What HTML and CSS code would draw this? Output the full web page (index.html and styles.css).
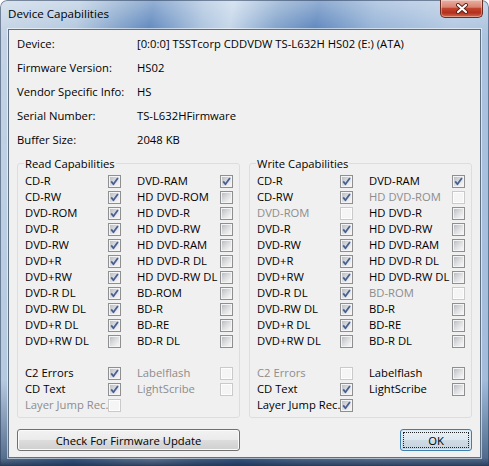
FILE: index.html
```html
<!DOCTYPE html>
<html>
<head>
<meta charset="utf-8">
<title>Device Capabilities</title>
<link rel="stylesheet" href="styles.css">
</head>
<body>
<div class="window">
  <div class="titlebar">
    <span class="title">Device Capabilities</span>
    <div class="close">
      <svg class="xicon" width="16" height="11" viewBox="0 0 16 11">
        <path class="xo" d="M4 2L12 9M12 2L4 9"/>
        <path class="xi" d="M4 2L12 9M12 2L4 9"/>
      </svg>
    </div>
  </div>
  <div class="client">
    <div class="info">
      <span>Device:</span><span>[0:0:0] TSSTcorp CDDVDW TS-L632H HS02 (E:) (ATA)</span>
      <span>Firmware Version:</span><span>HS02</span>
      <span>Vendor Specific Info:</span><span>HS</span>
      <span>Serial Number:</span><span>TS-L632HFirmware</span>
      <span>Buffer Size:</span><span>2048 KB</span>
    </div>
    <div class="groups">
      <fieldset class="group">
        <legend>Read Capabilities</legend>
        <div class="caps">
          <div class="cap"><span class="lbl">CD-R</span><span class="cb"><svg class="tick" viewBox="0 0 11 11"><path d="M2.2 5.4L4.4 8.2L8.9 2"/></svg></span></div>
          <div class="cap"><span class="lbl">DVD-RAM</span><span class="cb"><svg class="tick" viewBox="0 0 11 11"><path d="M2.2 5.4L4.4 8.2L8.9 2"/></svg></span></div>
          <div class="cap"><span class="lbl">CD-RW</span><span class="cb"><svg class="tick" viewBox="0 0 11 11"><path d="M2.2 5.4L4.4 8.2L8.9 2"/></svg></span></div>
          <div class="cap"><span class="lbl">HD DVD-ROM</span><span class="cb"></span></div>
          <div class="cap"><span class="lbl">DVD-ROM</span><span class="cb"><svg class="tick" viewBox="0 0 11 11"><path d="M2.2 5.4L4.4 8.2L8.9 2"/></svg></span></div>
          <div class="cap"><span class="lbl">HD DVD-R</span><span class="cb"></span></div>
          <div class="cap"><span class="lbl">DVD-R</span><span class="cb"><svg class="tick" viewBox="0 0 11 11"><path d="M2.2 5.4L4.4 8.2L8.9 2"/></svg></span></div>
          <div class="cap"><span class="lbl">HD DVD-RW</span><span class="cb"></span></div>
          <div class="cap"><span class="lbl">DVD-RW</span><span class="cb"><svg class="tick" viewBox="0 0 11 11"><path d="M2.2 5.4L4.4 8.2L8.9 2"/></svg></span></div>
          <div class="cap"><span class="lbl">HD DVD-RAM</span><span class="cb"></span></div>
          <div class="cap"><span class="lbl">DVD+R</span><span class="cb"><svg class="tick" viewBox="0 0 11 11"><path d="M2.2 5.4L4.4 8.2L8.9 2"/></svg></span></div>
          <div class="cap"><span class="lbl">HD DVD-R DL</span><span class="cb"></span></div>
          <div class="cap"><span class="lbl">DVD+RW</span><span class="cb"><svg class="tick" viewBox="0 0 11 11"><path d="M2.2 5.4L4.4 8.2L8.9 2"/></svg></span></div>
          <div class="cap"><span class="lbl">HD DVD-RW DL</span><span class="cb"></span></div>
          <div class="cap"><span class="lbl">DVD-R DL</span><span class="cb"><svg class="tick" viewBox="0 0 11 11"><path d="M2.2 5.4L4.4 8.2L8.9 2"/></svg></span></div>
          <div class="cap"><span class="lbl">BD-ROM</span><span class="cb"></span></div>
          <div class="cap"><span class="lbl">DVD-RW DL</span><span class="cb"><svg class="tick" viewBox="0 0 11 11"><path d="M2.2 5.4L4.4 8.2L8.9 2"/></svg></span></div>
          <div class="cap"><span class="lbl">BD-R</span><span class="cb"></span></div>
          <div class="cap"><span class="lbl">DVD+R DL</span><span class="cb"><svg class="tick" viewBox="0 0 11 11"><path d="M2.2 5.4L4.4 8.2L8.9 2"/></svg></span></div>
          <div class="cap"><span class="lbl">BD-RE</span><span class="cb"></span></div>
          <div class="cap"><span class="lbl">DVD+RW DL</span><span class="cb"></span></div>
          <div class="cap"><span class="lbl">BD-R DL</span><span class="cb"></span></div>
        </div>
        <div class="caps extras">
          <div class="cap"><span class="lbl">C2 Errors</span><span class="cb"><svg class="tick" viewBox="0 0 11 11"><path d="M2.2 5.4L4.4 8.2L8.9 2"/></svg></span></div>
          <div class="cap dis"><span class="lbl">Labelflash</span><span class="cb"></span></div>
          <div class="cap"><span class="lbl">CD Text</span><span class="cb"><svg class="tick" viewBox="0 0 11 11"><path d="M2.2 5.4L4.4 8.2L8.9 2"/></svg></span></div>
          <div class="cap dis"><span class="lbl">LightScribe</span><span class="cb"></span></div>
          <div class="cap dis"><span class="lbl">Layer Jump Rec.</span><span class="cb"></span></div>
        </div>
      </fieldset>
      <fieldset class="group">
        <legend>Write Capabilities</legend>
        <div class="caps">
          <div class="cap"><span class="lbl">CD-R</span><span class="cb"><svg class="tick" viewBox="0 0 11 11"><path d="M2.2 5.4L4.4 8.2L8.9 2"/></svg></span></div>
          <div class="cap"><span class="lbl">DVD-RAM</span><span class="cb"><svg class="tick" viewBox="0 0 11 11"><path d="M2.2 5.4L4.4 8.2L8.9 2"/></svg></span></div>
          <div class="cap"><span class="lbl">CD-RW</span><span class="cb"><svg class="tick" viewBox="0 0 11 11"><path d="M2.2 5.4L4.4 8.2L8.9 2"/></svg></span></div>
          <div class="cap dis"><span class="lbl">HD DVD-ROM</span><span class="cb"></span></div>
          <div class="cap dis"><span class="lbl">DVD-ROM</span><span class="cb"></span></div>
          <div class="cap"><span class="lbl">HD DVD-R</span><span class="cb"></span></div>
          <div class="cap"><span class="lbl">DVD-R</span><span class="cb"><svg class="tick" viewBox="0 0 11 11"><path d="M2.2 5.4L4.4 8.2L8.9 2"/></svg></span></div>
          <div class="cap"><span class="lbl">HD DVD-RW</span><span class="cb"></span></div>
          <div class="cap"><span class="lbl">DVD-RW</span><span class="cb"><svg class="tick" viewBox="0 0 11 11"><path d="M2.2 5.4L4.4 8.2L8.9 2"/></svg></span></div>
          <div class="cap"><span class="lbl">HD DVD-RAM</span><span class="cb"></span></div>
          <div class="cap"><span class="lbl">DVD+R</span><span class="cb"><svg class="tick" viewBox="0 0 11 11"><path d="M2.2 5.4L4.4 8.2L8.9 2"/></svg></span></div>
          <div class="cap"><span class="lbl">HD DVD-R DL</span><span class="cb"></span></div>
          <div class="cap"><span class="lbl">DVD+RW</span><span class="cb"><svg class="tick" viewBox="0 0 11 11"><path d="M2.2 5.4L4.4 8.2L8.9 2"/></svg></span></div>
          <div class="cap"><span class="lbl">HD DVD-RW DL</span><span class="cb"></span></div>
          <div class="cap"><span class="lbl">DVD-R DL</span><span class="cb"><svg class="tick" viewBox="0 0 11 11"><path d="M2.2 5.4L4.4 8.2L8.9 2"/></svg></span></div>
          <div class="cap dis"><span class="lbl">BD-ROM</span><span class="cb"></span></div>
          <div class="cap"><span class="lbl">DVD-RW DL</span><span class="cb"><svg class="tick" viewBox="0 0 11 11"><path d="M2.2 5.4L4.4 8.2L8.9 2"/></svg></span></div>
          <div class="cap"><span class="lbl">BD-R</span><span class="cb"></span></div>
          <div class="cap"><span class="lbl">DVD+R DL</span><span class="cb"><svg class="tick" viewBox="0 0 11 11"><path d="M2.2 5.4L4.4 8.2L8.9 2"/></svg></span></div>
          <div class="cap"><span class="lbl">BD-RE</span><span class="cb"></span></div>
          <div class="cap"><span class="lbl">DVD+RW DL</span><span class="cb"></span></div>
          <div class="cap"><span class="lbl">BD-R DL</span><span class="cb"></span></div>
        </div>
        <div class="caps extras">
          <div class="cap dis"><span class="lbl">C2 Errors</span><span class="cb"></span></div>
          <div class="cap"><span class="lbl">Labelflash</span><span class="cb"></span></div>
          <div class="cap"><span class="lbl">CD Text</span><span class="cb"><svg class="tick" viewBox="0 0 11 11"><path d="M2.2 5.4L4.4 8.2L8.9 2"/></svg></span></div>
          <div class="cap"><span class="lbl">LightScribe</span><span class="cb"></span></div>
          <div class="cap"><span class="lbl">Layer Jump Rec.</span><span class="cb"><svg class="tick" viewBox="0 0 11 11"><path d="M2.2 5.4L4.4 8.2L8.9 2"/></svg></span></div>
        </div>
      </fieldset>
    </div>
    <div class="buttons">
      <button class="btn fw">Check For Firmware Update</button>
      <button class="btn ok"><span class="focus">OK</span></button>
    </div>
  </div>
</div>
</body>
</html>
```

FILE: styles.css
```css
html, body {
  margin: 0;
  padding: 0;
  background: #ffffff;
}

body {
  font-family: "Open Sans", "Noto Sans", sans-serif;
  font-size: 11.25px;
  color: #000;
}

.window {
  width: 489px;
  height: 466px;
  box-sizing: border-box;
  display: flex;
  flex-direction: column;
  border-radius: 7px 7px 0 0;
  overflow: hidden;
  background:
    linear-gradient(180deg, rgba(255,255,255,0.35) 0, rgba(255,255,255,0.05) 28px, rgba(255,255,255,0) 40px),
    linear-gradient(180deg, rgba(30,55,90,0) 380px, rgba(30,55,90,0.6) 458px, rgba(20,40,70,0.85) 466px),
    linear-gradient(100deg, #c6d5e6 0%, #b3c8df 14%, #7d9fc8 22%, #5c86bd 27%, #a9c1dd 36%, #c3d5e9 41%, #7fa1ca 49%, #5a84bc 56%, #93b1d6 66%, #b1c7e1 80%, #9fbad9 100%);
  box-shadow: inset 0 0 0 1px rgba(40,60,90,0.55);
}

.titlebar {
  height: 29px;
  flex: none;
  display: flex;
  align-items: flex-start;
}

.title {
  font-size: 11.6px;
  line-height: 16px;
  margin: 6px 0 0 8px;
  color: #000;
}

.close {
  margin-left: auto;
  margin-right: 6px;
  width: 43px;
  height: 18px;
  box-sizing: border-box;
  border: 1px solid #6a2b22;
  border-top: 0;
  border-radius: 0 0 5px 5px;
  background: linear-gradient(180deg, #eab0a3 0%, #d98371 42%, #c2442f 50%, #b3301d 75%, #d06a50 100%);
  box-shadow: inset 0 0 0 1px rgba(255,255,255,0.35);
  display: flex;
  align-items: center;
  justify-content: center;
}

.xicon { display: block; }
.xo { stroke: #5a2018; stroke-width: 4; stroke-linecap: round; fill: none; }
.xi { stroke: #ffffff; stroke-width: 2.2; stroke-linecap: round; fill: none; }

.client {
  flex: none;
  height: 429px;
  margin: 0 8px;
  box-sizing: border-box;
  border: 1px solid #5f6f82;
  box-shadow: 0 0 0 1px rgba(255,255,255,0.55);
  background: #f0f0f0;
  padding: 1px 8px 0;
}

.info {
  display: grid;
  grid-template-columns: 120px 1fr;
  grid-auto-rows: 24px;
  align-items: center;
  white-space: nowrap;
}

.groups {
  display: flex;
  gap: 9px;
  margin-top: 5px;
}

.group {
  width: 223px;
  box-sizing: border-box;
  margin: 0;
  min-width: 0;
  border: 1px solid #d5dfe5;
  border-radius: 3px;
  padding: 2px 6px 4px 7px;
}

.group legend {
  padding: 0 1px;
  margin-left: -1px;
  line-height: 15px;
  font-size: 11.25px;
}

.caps {
  display: grid;
  grid-template-columns: 96px 96px;
  column-gap: 16px;
  grid-auto-rows: 16px;
}

.extras {
  margin-top: 16px;
}

.cap {
  display: flex;
  align-items: center;
}

.lbl {
  width: 83px;
  flex: none;
  white-space: nowrap;
  line-height: 16px;
}

.cb {
  width: 13px;
  height: 13px;
  flex: none;
  box-sizing: border-box;
  border: 1px solid #8e8f8f;
  background: linear-gradient(135deg, #b1b5bc 0%, #d9dbde 45%, #f1f1f1 80%, #f7f7f7 100%);
  box-shadow: inset 0 0 0 1px #f4f4f4;
}

.tick {
  display: block;
  width: 11px;
  height: 11px;
}

.tick path {
  fill: none;
  stroke: #4a5f92;
  stroke-width: 1.8;
  stroke-linejoin: round;
}

.dis .lbl {
  color: #8d8d8d;
}

.dis .cb {
  border-color: #c9cacb;
  background: #f5f5f5;
  box-shadow: inset 0 0 0 1px #fdfdfd;
}

.buttons {
  display: flex;
  justify-content: space-between;
  margin-top: 11px;
}

.btn {
  height: 22px;
  box-sizing: border-box;
  border: 1px solid #707070;
  border-radius: 3px;
  background: linear-gradient(180deg, #f2f2f2 0%, #ebebeb 50%, #dddddd 50%, #cfcfcf 100%);
  box-shadow: inset 0 0 0 1px #fbfbfb;
  font-family: "Open Sans", "Noto Sans", sans-serif;
  font-size: 11.25px;
  color: #000;
  padding: 0;
  margin: 0;
}

.fw {
  width: 223px;
}

.ok {
  width: 72px;
  padding: 2px;
  border-color: #3c7fb1;
  background: linear-gradient(180deg, #e9f1f7 0%, #dfe8ef 50%, #cfdbe5 50%, #c4d3df 100%);
  box-shadow: inset 0 0 0 1px #dbe9f4;
}

.focus {
  display: flex;
  height: 100%;
  box-sizing: border-box;
  align-items: center;
  justify-content: center;
  border: 1px dotted #222;
}
```
